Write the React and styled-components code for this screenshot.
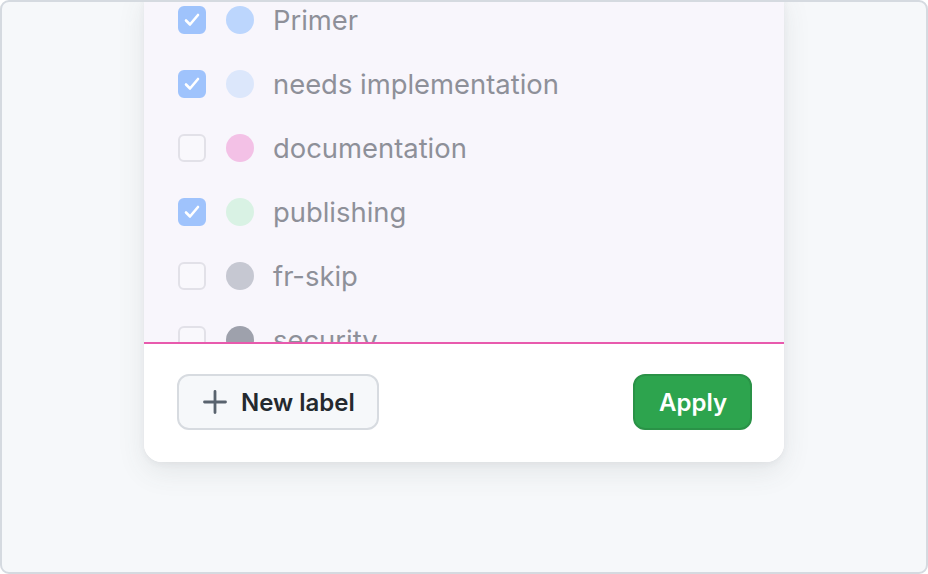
import React from "react";
import styled, { createGlobalStyle } from "styled-components";

const Global = createGlobalStyle`
  html, body { margin: 0; padding: 0; background: #ffffff; }
  body { font-family: Inter, "Noto Sans", sans-serif; }
  * { box-sizing: border-box; }
`;

const Frame = styled.div`
  width: 928px;
  height: 574px;
  border: 2px solid #d5dae0;
  border-radius: 9px;
  background: #f6f8fa;
  overflow: hidden;
  display: flex;
  flex-direction: column;
  justify-content: flex-end;
  align-items: center;
  padding-bottom: 110px;
`;

const Card = styled.div`
  width: 640px;
  flex-shrink: 0;
  background: #ffffff;
  border-radius: 18px;
  box-shadow: 0 10px 28px rgba(66, 74, 83, 0.1), 0 2px 6px rgba(66, 74, 83, 0.06);
  display: flex;
  flex-direction: column;
  overflow: hidden;
`;

const List = styled.ul`
  list-style: none;
  margin: 0;
  padding: 0 34px;
  height: 354px;
  overflow: hidden;
  background: #f8f6fc;
`;

const Row = styled.li`
  height: 64px;
  display: flex;
  align-items: center;
`;

const Box = styled.span`
  width: 28px;
  height: 28px;
  border-radius: 6px;
  flex-shrink: 0;
  display: flex;
  align-items: center;
  justify-content: center;
  background: ${(p) => (p.$checked ? "#9fc3fc" : "#f9f8fc")};
  border: 2px solid ${(p) => (p.$checked ? "#9fc3fc" : "#e2e1e8")};
`;

const Dot = styled.span`
  width: 28px;
  height: 28px;
  border-radius: 50%;
  flex-shrink: 0;
  margin-left: 20px;
  background: ${(p) => p.$color};
`;

const Name = styled.span`
  margin-left: 19px;
  font-size: 27.4px;
  color: #8e9099;
  white-space: nowrap;
`;

const Footer = styled.div`
  border-top: 2px solid #e85aad;
  height: 120px;
  display: flex;
  align-items: center;
  justify-content: space-between;
  padding: 0 32px 2px 33px;
  background: #ffffff;
`;

const Button = styled.button`
  height: 56px;
  display: flex;
  align-items: center;
  gap: 14px;
  font-family: Inter, "Noto Sans", sans-serif;
  font-size: 24px;
  font-weight: 600;
  border-radius: 12px;
  cursor: pointer;
  padding: ${(p) => (p.$primary ? "0 23px 0 24px" : "0 22px 0 24px")};
  color: ${(p) => (p.$primary ? "#ffffff" : "#24292f")};
  background: ${(p) => (p.$primary ? "#2da44e" : "#f6f8fa")};
  border: 2px solid ${(p) => (p.$primary ? "#2a9247" : "#d7dbe0")};
`;

const Check = () => (
  <svg width="20" height="20" viewBox="0 0 20 20" fill="none">
    <path d="M4 10.5 L8 14.5 L16 5" stroke="#ffffff" strokeWidth="2.6" strokeLinecap="round" strokeLinejoin="round" />
  </svg>
);

const Plus = () => (
  <svg width="24" height="24" viewBox="0 0 24 24" fill="none">
    <path d="M12 1.5 V22.5 M1.5 12 H22.5" stroke="#59636e" strokeWidth="2.8" strokeLinecap="round" />
  </svg>
);

const labels = [
  { name: "Primer", color: "#bcd6fd", checked: true },
  { name: "needs implementation", color: "#dce7fb", checked: true },
  { name: "documentation", color: "#f3c1e6", checked: false },
  { name: "publishing", color: "#d9f2e4", checked: true },
  { name: "fr-skip", color: "#c6c8d2", checked: false },
  { name: "security", color: "#9ea1ac", checked: false },
];

export default function App() {
  return (
    <>
      <Global />
      <Frame>
        <Card>
          <List>
            {labels.map((l) => (
              <Row key={l.name}>
                <Box $checked={l.checked}>{l.checked && <Check />}</Box>
                <Dot $color={l.color} />
                <Name>{l.name}</Name>
              </Row>
            ))}
          </List>
          <Footer>
            <Button>
              <Plus />
              New label
            </Button>
            <Button $primary>Apply</Button>
          </Footer>
        </Card>
      </Frame>
    </>
  );
}
